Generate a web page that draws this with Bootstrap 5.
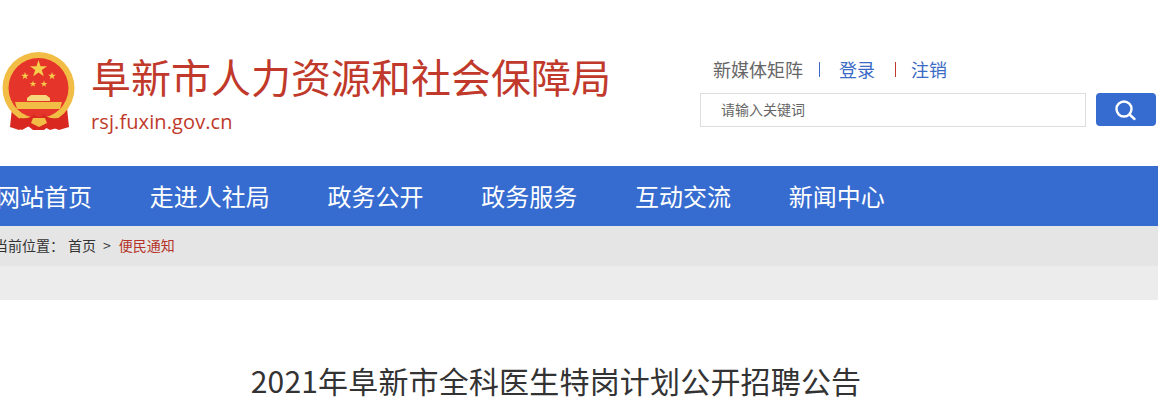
<!DOCTYPE html>
<html lang="zh-CN">

<head>
    <meta charset="UTF-8">
    <meta name="viewport" content="width=device-width, initial-scale=1.0">
    <title>阜新市人力资源和社会保障局</title>
    <link href="https://cdn.jsdelivr.net/npm/bootstrap@5.3.2/dist/css/bootstrap.min.css" rel="stylesheet">
    <style>
        html, body { overflow: hidden; height: 400px; }
        body { font-family: "Noto Sans CJK SC", "Open Sans", sans-serif; background: #fff; color: #333; }
        .wrap-1200 { width: 1200px; margin-left: -44px; }
        .site-top { height: 166px; }
        .emblem-box { padding: 52px 0 0 45px; width: 135px; }
        .site-name { font-size: 40px; line-height: 48px; color: #c0392b; padding-top: 52px; white-space: nowrap; }
        .site-url { font-family: "Open Sans", sans-serif; font-size: 20px; letter-spacing: .1px; line-height: 28px; color: #c0392b; margin-top: 8px; }
        .top-right { width: 456px; padding-top: 56px; }
        .top-links { font-size: 18px; line-height: 26px; color: #666; padding-left: 13px; }
        .top-links a { color: #3a6bc5; text-decoration: none; }
        .link-sep { width: 1px; height: 15px; }
        .sep-blue { background: #3a6bc5; margin: 0 19px 0 16px; }
        .sep-red { background: #c0392b; margin: 0 15px 0 20px; }
        .search-line { margin-top: 11px; }
        .search-input { width: 386px; height: 34px; border: 1px solid #ddd; font-size: 14px; color: #666; padding-left: 20px; line-height: 30px; }
        .search-btn { width: 60px; height: 33px; margin-left: 10px; background: #366cd0; border-radius: 4px; }
        .main-nav { height: 60px; background: #366cd0; }
        .main-nav a { font-size: 24px; line-height: 60px; color: #fff; text-decoration: none; padding: 0 28.900px; white-space: nowrap; }
        .main-nav .wrap-1200 { padding-left: 11px; }
        .crumb-band { height: 40px; background: #e5e5e5; font-size: 14px; line-height: 38px; color: #333; }
        .crumb-band .wrap-1200 { padding-left: 38px; }
        .crumb-home { margin-left: 4px; }
        .crumb-arrow { margin: 0 8px 0 7px; }
        .crumb-now { color: #b5332a; }
        .gap-band { height: 34px; background: #ececec; }
        .art-title { font-size: 30px; letter-spacing: .18px; line-height: 40px; color: #333; text-align: center; padding-top: 60px; white-space: nowrap; }
    </style>
</head>

<body>
    <div class="site-top">
        <div class="wrap-1200 d-flex">
            <div class="emblem-box flex-shrink-0">
                <svg width="76" height="80" viewBox="0 0 76 80">
                    <defs>
                        <polygon id="em-star" points="0,-1 .225,-.309 .951,-.309 .363,.118 .588,.809 0,.382 -.588,.809 -.363,.118 -.951,-.309 -.225,-.309" fill="#f6cf4a"/>
                    </defs>
                    <!-- ribbons -->
                    <path d="M11 56 L66 56 L68 75 L58 78 L48 74 L43 78 L32 78 L27 74 L18 78 L9 75z" fill="#d8281f"/>
                    <!-- ring and disc -->
                    <circle cx="37.500" cy="36" r="36" fill="#f2bd45"/>
                    <circle cx="37.500" cy="36" r="30" fill="#e5352a"/>
                    <use href="#em-star" transform="translate(37.500 17) scale(9)"/>
                    <use href="#em-star" transform="translate(24 24) scale(4)"/>
                    <use href="#em-star" transform="translate(51 24) scale(4)"/>
                    <use href="#em-star" transform="translate(32 32) scale(3.500)"/>
                    <use href="#em-star" transform="translate(43 32) scale(3.500)"/>
                    <!-- gate -->
                    <path d="M30 43h15l4 3v3H26v-3z" fill="#f7d77c"/>
                    <path d="M14 50h47l-2 7H16z" fill="#f2bd45"/>
                    <path d="M22 58h31l-6 4H28z" fill="#e5352a"/>
                    <!-- knot over the ring -->
                    <path d="M19 66c6 1 11 0 14-4 2 4 7 4 10 0 3 4 8 5 14 4l2 9-10 3-9-5-3 5h-4l-3-5-9 5-4-2z" fill="#d8281f"/>
                    <path d="M32 66h12l2 5-8 4-8-4z" fill="#f2bd45"/>
                </svg>
            </div>
            <div class="flex-grow-1">
                <div class="site-name">阜新市人力资源和社会保障局</div>
                <div class="site-url">rsj.fuxin.gov.cn</div>
            </div>
            <div class="top-right flex-shrink-0">
                <div class="top-links d-flex align-items-center">
                    <span>新媒体矩阵</span><i class="link-sep sep-blue"></i>
                    <a href="#">登录</a><i class="link-sep sep-red"></i>
                    <a href="#">注销</a>
                </div>
                <div class="search-line d-flex">
                    <div class="search-input">请输入关键词</div>
                    <a href="#" class="search-btn d-flex align-items-center justify-content-center">
                        <svg width="22" height="22" viewBox="0 0 22 22" fill="none" stroke="#fff" stroke-width="2.400">
                            <circle cx="9" cy="10" r="7.500"/>
                            <path d="M14.500 15.500L19.500 20" stroke-linecap="round"/>
                        </svg>
                    </a>
                </div>
            </div>
        </div>
    </div>
    <nav class="main-nav">
        <div class="wrap-1200 d-flex">
            <a href="#">网站首页</a>
            <a href="#">走进人社局</a>
            <a href="#">政务公开</a>
            <a href="#">政务服务</a>
            <a href="#">互动交流</a>
            <a href="#">新闻中心</a>
        </div>
    </nav>
    <div class="crumb-band">
        <div class="wrap-1200 d-flex">
            <span>当前位置：</span>
            <span class="crumb-home">首页</span>
            <span class="crumb-arrow">&gt;</span>
            <span class="crumb-now">便民通知</span>
        </div>
    </div>
    <div class="gap-band"></div>
    <div class="wrap-1200">
        <h1 class="art-title fw-normal m-0">2021年阜新市全科医生特岗计划公开招聘公告</h1>
    </div>
    <script src="https://cdn.jsdelivr.net/npm/bootstrap@5.3.2/dist/js/bootstrap.bundle.min.js"></script>
</body>

</html>
